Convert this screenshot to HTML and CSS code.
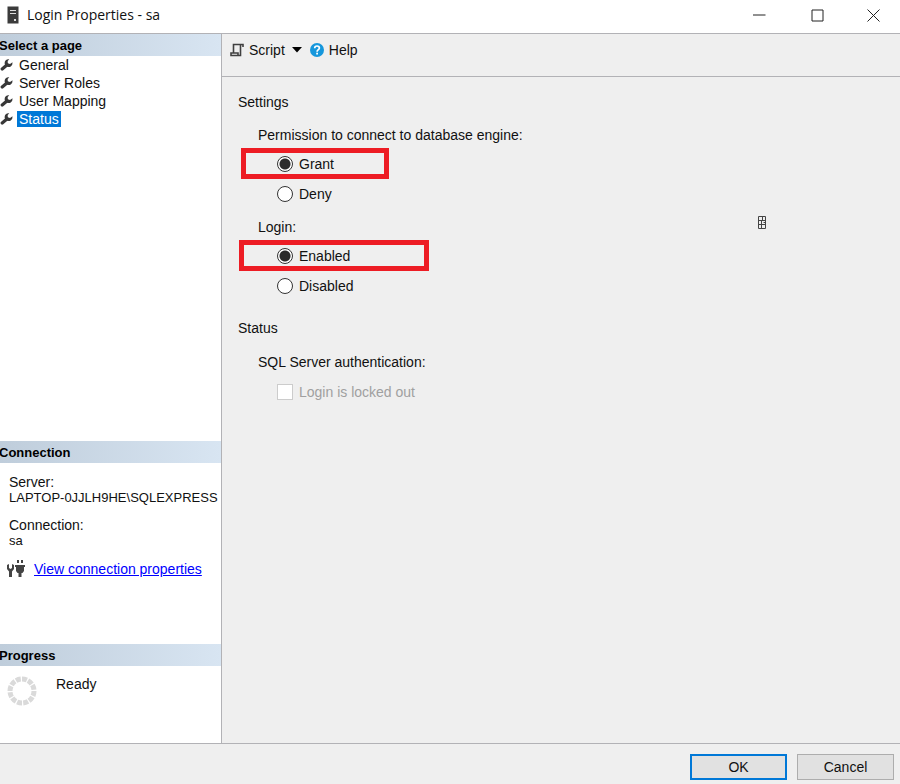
FILE: index.html
```html
<!DOCTYPE html>
<html lang="en">
<head>
<meta charset="utf-8">
<title>Login Properties - sa</title>
<link rel="stylesheet" href="styles.css">
</head>
<body>
<svg class="defs" aria-hidden="true">
  <symbol id="wrench" viewBox="0 0 12 12">
    <path d="M1.700 10 6.400 6" stroke="#383838" stroke-width="3.200" stroke-linecap="round"/>
    <path d="M8.800.3C6-.2 3.700 2 4.200 4.800 4.900 8.800 10.500 9 11.800 5.400L12 3.200 9.500 4.900 7.300 4.300 7.200 2Z" fill="#383838"/>
  </symbol>
</svg>
<div class="window">
  <header class="titlebar">
    <svg class="server" viewBox="0 0 12 18" aria-hidden="true">
      <rect x=".5" y=".5" width="11" height="17" fill="#3b3b3b"/>
      <path d="M3 4.500h6M3 7.500h6" stroke="#ddd"/>
      <rect x="7" y="13" width="2" height="2" fill="#ddd"/>
    </svg>
    <h1>Login Properties - sa</h1>
    <div class="controls">
      <button type="button" aria-label="Minimize"><svg viewBox="0 0 13 13"><path d="M0 6.500h12.500"/></svg></button>
      <button type="button" aria-label="Maximize"><svg viewBox="0 0 13 13"><path d="M1 1.500h11v11H1z"/></svg></button>
      <button type="button" aria-label="Close"><svg viewBox="0 0 13 13"><path d="M.5 1 12.500 13M12.500 1 .5 13"/></svg></button>
    </div>
  </header>

  <div class="body">
    <aside class="sidebar">
      <section class="pages">
        <h2>Select a page</h2>
        <nav>
          <a href="#general"><svg><use href="#wrench"/></svg><span>General</span></a>
          <a href="#roles"><svg><use href="#wrench"/></svg><span>Server Roles</span></a>
          <a href="#mapping"><svg><use href="#wrench"/></svg><span>User Mapping</span></a>
          <a href="#status" class="current" aria-current="page"><svg><use href="#wrench"/></svg><span>Status</span></a>
        </nav>
      </section>
      <section class="connection">
        <h2>Connection</h2>
        <dl>
          <dt>Server:</dt>
          <dd>LAPTOP-0JJLH9HE\SQLEXPRESS</dd>
          <dt>Connection:</dt>
          <dd>sa</dd>
        </dl>
        <div class="view">
          <svg viewBox="0 0 18 18" aria-hidden="true" fill="#444">
            <path d="M0 5 2 4V8L3.500 9 5 8V4L7 5V9L5 11.500V17H2V11.500L0 9Z"/>
            <path d="M10 0h2v3h-2zM14 0h2v3h-2zM8 5h10v2h-1v4l-1.500 2H14.500v4h-3v-4H10.500L9 11V7H8z"/>
          </svg>
          <a href="#connection">View connection properties</a>
        </div>
      </section>
      <section class="progress">
        <h2>Progress</h2>
        <div class="state">
          <svg viewBox="0 0 30 30" aria-hidden="true">
            <circle cx="15" cy="15" r="12" fill="none" stroke="#dadada" stroke-width="5" pathLength="120" stroke-dasharray="8 2"/>
          </svg>
          <span>Ready</span>
        </div>
      </section>
    </aside>

    <main>
      <div class="toolbar">
        <button type="button" class="script">
          <svg viewBox="0 0 14 14" aria-hidden="true" fill="none" stroke="#404040" stroke-width="1.600">
            <path d="M3.500 10V1.500H13V4M10.500 2V12.500H1V10H8V12.500"/>
          </svg>
          Script
        </button>
        <button type="button" class="arrow" aria-label="Script options"><svg viewBox="0 0 10 6"><path d="M0 0h10L5 5.500z"/></svg></button>
        <button type="button" class="help">
          <svg viewBox="0 0 14 14" aria-hidden="true">
            <circle cx="7" cy="7" r="7" fill="#1697dc"/>
            <path d="M4.700 5.300C4.700 2.300 9.400 2.300 9.400 5.100 9.400 6.700 7.100 6.700 7.100 8.700" fill="none" stroke="#fff" stroke-width="1.700"/>
            <rect x="6.200" y="9.700" width="1.800" height="1.800" fill="#fff"/>
          </svg>
          Help
        </button>
      </div>
      <form class="content" id="login">
        <h3>Settings</h3>
        <fieldset>
          <legend>Permission to connect to database engine:</legend>
          <label class="option marked grant"><input type="radio" name="permission" checked>Grant</label>
          <label class="option"><input type="radio" name="permission">Deny</label>
        </fieldset>
        <fieldset>
          <legend>Login:</legend>
          <label class="option marked enabled"><input type="radio" name="login" checked>Enabled</label>
          <label class="option"><input type="radio" name="login">Disabled</label>
        </fieldset>
        <h3>Status</h3>
        <fieldset class="authentication">
          <legend>SQL Server authentication:</legend>
          <label class="option locked"><input type="checkbox" disabled>Login is locked out</label>
        </fieldset>
        <svg class="glyph" viewBox="0 0 8 13" aria-hidden="true" fill="none" stroke="#444">
          <path d="M.5.5h7v12h-7zM.5 4.500h7M.5 8.500h7M3.500 4.500v8M4.500 0v4M5.500 6.500h2"/>
        </svg>
      </form>
    </main>
  </div>

  <footer>
    <button type="submit" form="login" class="primary">OK</button>
    <button type="button">Cancel</button>
  </footer>
</div>
</body>
</html>
```
FILE: styles.css
```css
* {
  box-sizing: border-box;
}

body {
  margin: 0;
  background: #efefef;
  color: #111;
  font: 14px/16px "Liberation Sans", Arial, sans-serif;
}

h1, h2, h3, dl, dd, fieldset, legend {
  margin: 0;
  padding: 0;
  border: 0;
}

button {
  padding: 0;
  border: 0;
  background: none;
  color: inherit;
  font: inherit;
}

svg {
  display: block;
  flex: none;
}

.defs {
  position: absolute;
  width: 0;
  height: 0;
}

.window {
  display: flex;
  flex-direction: column;
  min-height: 100vh;
}

.titlebar {
  display: flex;
  align-items: center;
  height: 34px;
  padding: 0 0 4px 7px;
  background: #fff;
  border-bottom: 1px solid #b2b2b6;
}

.titlebar h1 {
  margin-left: 8px;
  font: 14px/20px "Open Sans", "Segoe UI", sans-serif;
}

.server {
  width: 12px;
  height: 18px;
}

.controls {
  display: flex;
  margin-left: auto;
}

.controls button {
  display: grid;
  place-items: center;
  width: 58px;
  height: 28px;
}

.controls button:last-child {
  width: 54px;
}

.controls svg {
  width: 13px;
  height: 14px;
  overflow: visible;
  fill: none;
  stroke: #222;
}

.body {
  display: flex;
  flex: 1;
}

.sidebar {
  display: flex;
  flex-direction: column;
  flex: none;
  width: 222px;
  background: #fff;
  border-right: 1px solid #b2b2b6;
  border-bottom: 1px solid #b2b2b6;
  overflow: hidden;
}

.sidebar h2 {
  height: 22px;
  background: linear-gradient(90deg, #bfcddb, #d8e5f2);
  color: #000;
  font-size: 13px;
  line-height: 24px;
  text-indent: -1px;
}

.pages {
  flex: 1;
}

.pages a {
  display: flex;
  align-items: center;
  height: 18px;
  gap: 4px;
  color: inherit;
  text-decoration: none;
}

.pages svg {
  width: 13px;
  height: 12px;
}

.pages span {
  padding: 0 2px;
}

.pages .current span {
  background: #0078d7;
  color: #fff;
}

.connection {
  height: 203px;
}

.connection dl {
  padding: 11px 0 0 9px;
  white-space: nowrap;
}

.connection dd {
  margin-bottom: 11px;
  font-size: 13px;
}

.view {
  display: flex;
  align-items: center;
  gap: 9px;
  padding-left: 7px;
}

.view svg {
  width: 18px;
  height: 18px;
}

.view a {
  color: #00f;
}

.progress {
  height: 99px;
}

.state {
  display: flex;
  gap: 19px;
  padding: 10px 7px;
}

.state svg {
  width: 30px;
  height: 30px;
}

main {
  flex: 1;
  border-bottom: 1px solid #b2b2b6;
}

.toolbar {
  display: flex;
  align-items: flex-start;
  height: 43px;
  padding: 8px 8px 0;
  border-bottom: 1px solid #b2b2b6;
}

.toolbar button {
  display: flex;
  align-items: center;
  height: 16px;
  gap: 5px;
}

.toolbar svg {
  width: 14px;
  height: 14px;
}

.toolbar .arrow {
  margin: 0 8px 0 7px;
}

.toolbar .arrow svg {
  width: 10px;
  height: 6px;
}

.content {
  position: relative;
  padding: 17px 16px;
}

h3 {
  font-size: 14px;
  font-weight: normal;
}

fieldset {
  padding-top: 17px;
}

fieldset + fieldset {
  padding-top: 10px;
}

legend {
  float: left;
  width: 100%;
  padding-left: 20px;
  margin-bottom: 5px;
}

.option {
  display: flex;
  align-items: center;
  clear: both;
  height: 30px;
  padding-left: 39px;
}

.marked {
  border: 5px solid #ed1c24;
  height: 31px;
}

.grant {
  width: 148px;
  margin-left: 3px;
  padding-left: 31px;
}

.enabled {
  width: 190px;
  margin-left: 1px;
  padding-left: 33px;
}

.option input {
  appearance: none;
  width: 16px;
  height: 16px;
  margin: 0 6px 0 0;
  border: 1px solid #333;
  background: #fff;
}

.option input[type="radio"] {
  border-radius: 50%;
}

.option input:checked {
  background: radial-gradient(circle, #2b2b2b 0 5px, #fff 6px);
}

.locked {
  color: #a0a0a0;
}

.locked input {
  border-color: #ccc;
}

fieldset + h3 {
  margin-top: 19px;
}

.authentication {
  padding-top: 18px;
}

.authentication legend {
  margin-bottom: 7px;
}

.glyph {
  position: absolute;
  top: 139px;
  left: 536px;
  width: 8px;
  height: 13px;
}

footer {
  display: flex;
  justify-content: flex-end;
  gap: 10px;
  height: 40px;
  padding: 10px 6px 4px;
}

footer button {
  width: 97px;
  height: 26px;
  background: #e1e1e1;
  border: 1px solid #adadad;
}

footer .primary {
  border: 2px solid #0078d7;
}
```
